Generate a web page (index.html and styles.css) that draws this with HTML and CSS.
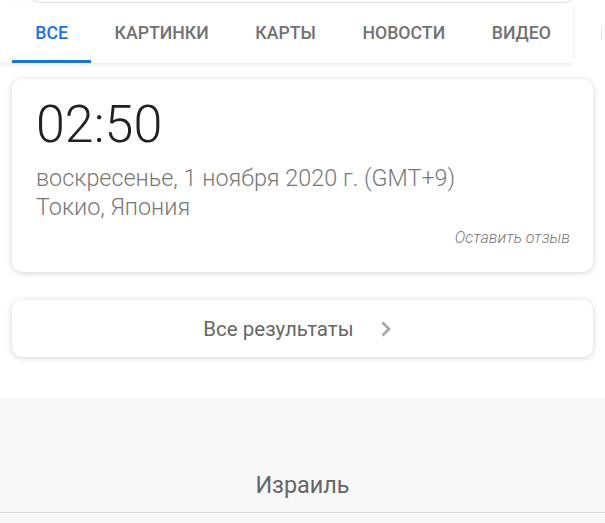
FILE: index.html
```html
<!DOCTYPE html>
<html lang="ru">
<head>
  <meta charset="UTF-8" />
  <title>Время в Токио</title>
  <link rel="stylesheet" href="styles.css">
</head>
<body>
  <div class="search"></div>

  <div class="tabs-row">
    <nav class="tabs">
      <a class="tab active">Все</a>
      <a class="tab">Картинки</a>
      <a class="tab">Карты</a>
      <a class="tab">Новости</a>
      <a class="tab">Видео</a>
    </nav>
    <span class="tabs-sep"></span>
  </div>

  <main class="results">
    <div class="card clock">
      <div class="time">02:50</div>
      <div class="date">воскресенье, 1 ноября 2020 г. (GMT+9)<br>Токио, Япония</div>
      <div class="feedback">Оставить отзыв</div>
    </div>

    <a class="card more">
      <span>Все результаты</span>
      <svg width="12" height="16" viewBox="0 0 12 16"><path d="M2.5 1.5 L9 8 L2.5 14.5" fill="none" stroke="#a6a6a6" stroke-width="2.6"/></svg>
    </a>
  </main>

  <section class="related">
    <div class="related-item">Израиль</div>
  </section>
</body>
</html>
```

FILE: styles.css
```css
body { margin: 0; width: 605px; font-family: Roboto, "Liberation Sans", sans-serif; background: #fff; overflow: hidden; }

.search { height: 20px; margin: -18px 22px 0; border: 1px solid #dfe1e5; border-top: none; border-radius: 0 0 22px 22px; }

.tabs-row { display: flex; align-items: center; }
.tabs { display: flex; width: 561px; height: 60px; padding-left: 12px; background: #fff; box-shadow: 0 2px 4px rgba(0,0,0,0.08); }
.tab { display: flex; align-items: center; padding: 2px 23.3px 0; border-bottom: 3px solid transparent; font-size: 17.7px; font-weight: 500; text-transform: uppercase; color: #727272; }
.tab.active { color: #1a73e8; border-bottom-color: #1a73e8; }
.tabs-sep { width: 1px; height: 14px; margin-left: 28px; background: #e4e4e4; }

.results { padding: 16px 12px 41px; }
.card { display: block; background: #fff; border-radius: 10px; box-shadow: 0 1px 6px rgba(0,0,0,0.18); }

.clock { padding: 16px 23px 25px 24px; }
.time { font-size: 52px; line-height: 60px; font-weight: 300; color: #202124; }
.date { margin-top: 9px; font-size: 23.4px; line-height: 29px; font-weight: 300; color: #777; }
.feedback { margin-top: 7px; font-size: 16px; line-height: 18px; font-style: italic; font-weight: 300; color: #777; text-align: right; }

.more { display: flex; justify-content: center; align-items: center; gap: 26px; height: 57px; margin-top: 28px; padding-right: 10px; font-size: 20.5px; color: #666; }

.related { background: #f8f8f8; padding: 73px 0 20px; }
.related-item { height: 41px; border-bottom: 1px solid #dadce0; text-align: center; font-size: 23.4px; color: #666; }
```
